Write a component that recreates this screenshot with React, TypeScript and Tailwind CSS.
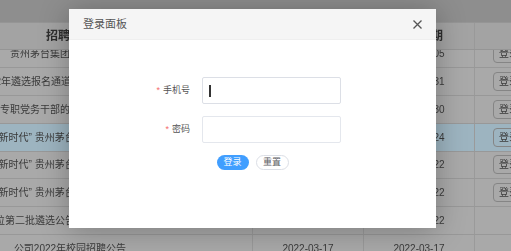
const rows = [
    { title: '贵州茅台集团公开招聘公告', start: '2022-03-21', end: '2022-04-05', btn: true, active: false },
    { title: '2022年遴选报名通道开通的相关通知公告', start: '2022-03-18', end: '2022-03-31', btn: true, active: false },
    { title: '专职党务干部的招聘与选拔公告', start: '2022-03-18', end: '2022-03-30', btn: true, active: false },
    { title: '“新时代” 贵州茅台酒股份招聘公告', start: '2022-03-17', end: '2022-03-24', btn: true, active: true },
    { title: '“新时代” 贵州茅台酒股份遴选公告', start: '2022-03-17', end: '2022-03-22', btn: true, active: false },
    { title: '“新时代” 贵州茅台酒股份选调公告', start: '2022-03-17', end: '2022-03-22', btn: true, active: false },
    { title: '单位第二批遴选公告及报名的事项说明', start: '2022-03-17', end: '2022-03-22', btn: false, active: false },
    { title: '公司2022年校园招聘公告', start: '2022-03-17', end: '2022-03-17', btn: false, active: false },
];

export default function App() {
    return (
        <div className="relative w-[511px] h-[251px] overflow-hidden bg-[#a9a9a9] font-['Liberation_Sans','Noto_Sans_CJK_SC',sans-serif]">
            {/* page behind the mask */}
            <div className="blur-[0.4px]">
                <div className="h-[22px] bg-[#8e8e8e]" />
                <div className="-ml-[112px] w-[740px]">
                    {/* header */}
                    <div className="relative z-10 grid grid-cols-[365px_111px_111px_153px] h-[28px] bg-[#a3a3a3] border-t border-b border-[#959595] text-[12px] font-bold text-[#2e2e2e]">
                        <div className="flex items-center justify-center border-r border-[#999]">招聘信息</div>
                        <div className="flex items-center justify-center border-r border-[#999]">发布日期</div>
                        <div className="flex items-center justify-center border-r border-[#999]">截止日期</div>
                        <div className="flex items-center justify-center">操作</div>
                    </div>
                    {/* body, scrolled a little */}
                    <div className="h-[201px] overflow-hidden">
                        <div className="-mt-[9.7px]">
                            {rows.map((r, i) => (
                                <div
                                    key={i}
                                    className={`grid grid-cols-[365px_111px_111px_153px] h-[27.8px] border-b border-[#989898] text-[10px] text-[#3a3a3a] ${r.active ? 'bg-[#9db4c0]' : 'bg-[#a9a9a9]'}`}
                                >
                                    <div className="flex items-center justify-center whitespace-nowrap border-r border-[#9a9a9a]">{r.title}</div>
                                    <div className="flex items-center justify-center border-r border-[#9a9a9a]">{r.start}</div>
                                    <div className="flex items-center justify-center border-r border-[#9a9a9a]">{r.end}</div>
                                    <div className="flex items-center pl-[18px]">
                                        {r.btn && (
                                            <span className="h-[19px] px-[5px] flex items-center border border-[#858585] rounded-[4px] text-[10px] text-[#3a3a3a]">登录</span>
                                        )}
                                    </div>
                                </div>
                            ))}
                        </div>
                    </div>
                </div>
            </div>

            {/* login dialog */}
            <div className="absolute left-[69px] top-[9px] w-[367px] h-[219px] bg-white shadow-[0_2px_28px_rgba(0,0,0,0.28)]">
                <div className="h-[31px] bg-[#f5f5f5] border-b border-[#efefef] flex items-center justify-between pl-[14px] pr-[14px]">
                    <span className="text-[11px] text-[#555]">登录面板</span>
                    <svg width="9" height="9" viewBox="0 0 9 9" className="text-[#555]">
                        <path d="M0.5 0.5 L8.5 8.5 M8.5 0.5 L0.5 8.5" stroke="currentColor" strokeWidth="1.3" fill="none" />
                    </svg>
                </div>
                <div className="pt-[37px] flex flex-col gap-[12px]">
                    <div className="flex items-center">
                        <label className="w-[121px] flex justify-end items-center text-[9px] text-[#555]">
                            <span className="text-[#f56c6c] mr-[3px]">*</span>手机号
                        </label>
                        <div className="ml-[12px] w-[139px] h-[27px] border border-[#dcdfe6] rounded-[2px] flex items-center pl-[6px]">
                            <span className="w-[1.5px] h-[12px] bg-[#333]" />
                        </div>
                    </div>
                    <div className="flex items-center">
                        <label className="w-[121px] flex justify-end items-center text-[9px] text-[#555]">
                            <span className="text-[#f56c6c] mr-[3px]">*</span>密码
                        </label>
                        <div className="ml-[12px] w-[139px] h-[27px] border border-[#e4e7ed] rounded-[2px]" />
                    </div>
                    <div className="flex justify-center gap-[7px]">
                        <button className="w-[32px] h-[15px] rounded-full bg-[#409eff] text-white text-[9px] leading-none">登录</button>
                        <button className="w-[33px] h-[15px] rounded-full border border-[#dcdfe6] bg-white text-[#606266] text-[9px] leading-none">重置</button>
                    </div>
                </div>
            </div>
        </div>
    );
}
